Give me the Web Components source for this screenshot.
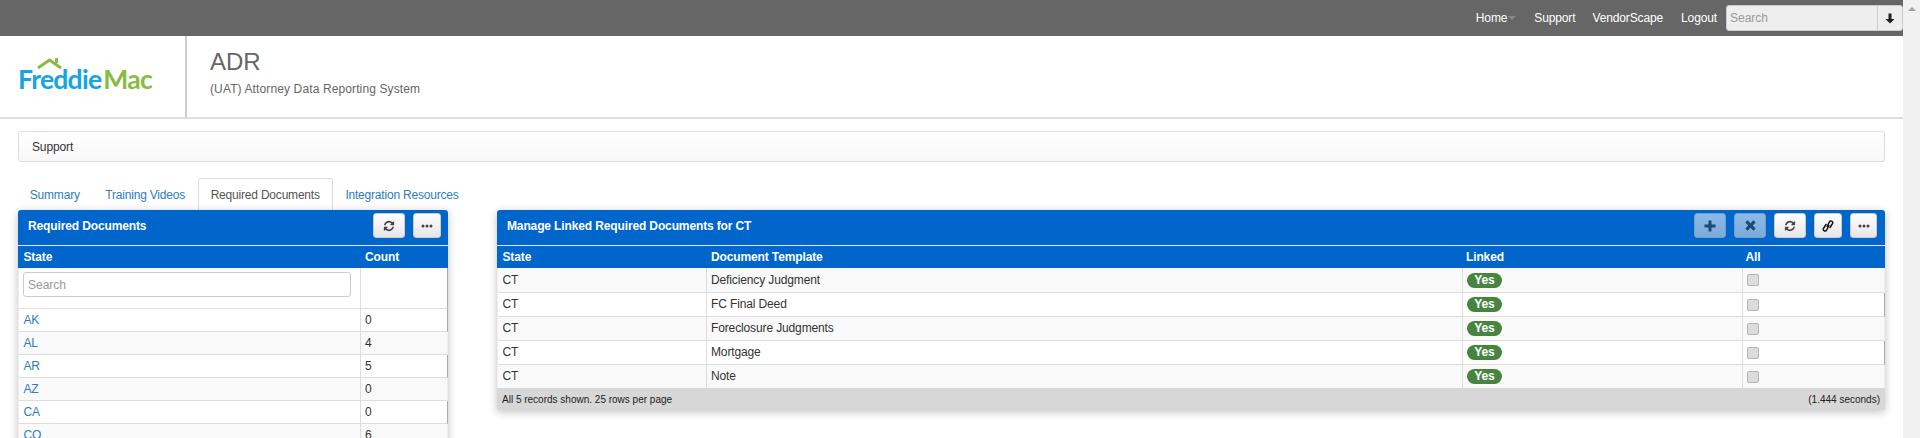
<!DOCTYPE html>
<html>
<head>
<meta charset="utf-8">
<title>ADR</title>
<style>
    html, body { margin: 0; height: 100%; overflow: hidden; background: #fff; }
    body { font-family: "Liberation Sans", Arial, sans-serif; font-size: 12px; color: #333; letter-spacing: -.13px; }
</style>
</head>
<body>
<app-shell>
    <top-nav></top-nav>
    <brand-header title="ADR" subtitle="(UAT) Attorney Data Reporting System"></brand-header>
    <crumb-bar>Support</crumb-bar>
    <tab-strip active="Required Documents" tabs="Summary|Training Videos|Required Documents|Integration Resources"></tab-strip>
    <panel-row>
        <data-panel heading="Required Documents">
            <icon-btn slot="actions" icon="refresh" w="32"></icon-btn>
            <icon-btn slot="actions" icon="more" w="28"></icon-btn>
            <state-table></state-table>
        </data-panel>
        <data-panel heading="Manage Linked Required Documents for CT">
            <icon-btn slot="actions" icon="plus" w="32" disabled></icon-btn>
            <icon-btn slot="actions" icon="times" w="32" disabled></icon-btn>
            <icon-btn slot="actions" icon="refresh" w="32"></icon-btn>
            <icon-btn slot="actions" icon="link" w="28"></icon-btn>
            <icon-btn slot="actions" icon="more" w="27" style="margin-right:1px"></icon-btn>
            <linked-table></linked-table>
        </data-panel>
    </panel-row>
</app-shell>

<script>
const FONT = `"Liberation Sans", Arial, sans-serif`;

const ICONS = {
    refresh: `<svg width="12" height="12" viewBox="0 0 1792 1792"><path d="M1639 1056q0 5-1 7-64 268-268 434.5t-478 166.5q-146 0-282.5-55t-243.5-157l-129 129q-19 19-45 19t-45-19-19-45v-448q0-26 19-45t45-19h448q26 0 45 19t19 45-19 45l-137 137q71 66 161 102t187 36q134 0 250-65t186-179q11-17 53-117 8-23 30-23h192q13 0 22.5 9.5t9.5 22.5zm25-800v448q0 26-19 45t-45 19h-448q-26 0-45-19t-19-45 19-45l138-138q-148-137-349-137-134 0-250 65t-186 179q-11 17-53 117-8 23-30 23h-199q-13 0-22.5-9.5t-9.5-22.5v-7q65-268 270-434.5t480-166.5q146 0 284 55.5t245 156.5l130-129q19-19 45-19t45 19 19 45z"/></svg>`,
    link: `<svg width="12" height="14" viewBox="0 0 12 14"><g fill="none" stroke="#111" stroke-width="1.500" stroke-linecap="round"><path d="M5.200 7.500L7.400 2.800A1.800 1.800 0 0 1 10.600 4.400L8 8.500"/><path d="M6.800 6.500L4.600 11.200A1.800 1.800 0 0 1 1.400 9.600L4 5.500"/></g></svg>`,
    more: `<svg width="12" height="4" viewBox="0 0 12 4"><circle cx="2" cy="2" r="1.500"/><circle cx="6" cy="2" r="1.500"/><circle cx="10" cy="2" r="1.500"/></svg>`,
    plus: `<svg width="12" height="12" viewBox="0 0 12 12"><path d="M4.500 0.500h3v4h4v3h-4v4h-3v-4h-4v-3h4z"/></svg>`,
    times: `<svg width="11" height="11" viewBox="0 0 11 11"><path d="M2.600 .3L5.500 3.200 8.400 .3 10.700 2.600 7.800 5.500 10.700 8.400 8.400 10.700 5.500 7.800 2.600 10.700 .3 8.400 3.200 5.500 .3 2.600z"/></svg>`,
    down: `<svg width="10" height="11" viewBox="0 0 10 11"><path d="M3.500 0.500h3v5.500h3L5 10.500 0.500 6h3z"/></svg>`
};

class AppShell extends HTMLElement {
    constructor() {
        super();
        this.attachShadow({ mode: 'open' });
        this.shadowRoot.innerHTML = `
            <style>
                :host { display: flex; height: 100vh; overflow: hidden; }
                .main { flex: 1; min-width: 0; }
                .scrollbar {
                    width: 17px;
                    background: #f1f1f1;
                    display: flex;
                    justify-content: center;
                    padding-top: 7px;
                    box-sizing: border-box;
                }
                .up {
                    width: 0; height: 0;
                    border-left: 4px solid transparent;
                    border-right: 4px solid transparent;
                    border-bottom: 4px solid #a3a3a3;
                }
            </style>
            <div class="main"><slot></slot></div>
            <div class="scrollbar"><div class="up"></div></div>
        `;
    }
}

class TopNav extends HTMLElement {
    constructor() {
        super();
        this.attachShadow({ mode: 'open' });
        this.shadowRoot.innerHTML = `
            <style>
                :host {
                    display: flex;
                    align-items: center;
                    justify-content: flex-end;
                    height: 36px;
                    background: #666;
                    color: #fff;
                    font: 12px ${FONT};
                }
                a { color: #fff; text-decoration: none; margin-right: 18px; }
                a.tight { margin-right: 17px; }
                .home { display: flex; align-items: center; margin-right: 18px; }
                .home a { margin: 0; }
                .caret {
                    width: 0; height: 0; margin-left: 1px;
                    border-left: 4px solid transparent;
                    border-right: 4px solid transparent;
                    border-top: 4px solid #888;
                }
                a.last { margin-right: 9px; }
                .search {
                    display: flex;
                    width: 177px;
                    height: 26px;
                    background: #eee;
                    border: 1px solid #ccc;
                    border-radius: 3px;
                    box-sizing: border-box;
                }
                input {
                    flex: 1; min-width: 0;
                    border: 0; background: none; outline: 0;
                    padding: 0 3px;
                    font: 12px ${FONT};
                }
                input::placeholder { color: #999; opacity: 1; }
                .drop {
                    width: 24px;
                    border-left: 1px solid #ccc;
                    display: flex; align-items: center; justify-content: center;
                    fill: #222;
                }
            </style>
            <div class="home"><a href="#">Home</a><span class="caret"></span></div>
            <a href="#" class="tight">Support</a>
            <a href="#">VendorScape</a>
            <a href="#" class="last">Logout</a>
            <div class="search">
                <input placeholder="Search">
                <div class="drop">${ICONS.down}</div>
            </div>
        `;
    }
}

class BrandHeader extends HTMLElement {
    connectedCallback() {
        if (this.shadowRoot) return;
        this.attachShadow({ mode: 'open' });
        this.shadowRoot.innerHTML = `
            <style>
                :host {
                    display: flex;
                    height: 83px;
                    box-sizing: border-box;
                    border-bottom: 2px solid #ddd;
                    background: #fff;
                }
                .logo {
                    width: 187px;
                    box-sizing: border-box;
                    padding: 21px 0 0 18px;
                    border-right: 2px solid #ccc;
                }
                .roof { display: block; margin-left: 19px; }
                .word {
                    display: block;
                    margin-top: -5px;
                    font: 700 26.500px/30px Lato, sans-serif;
                    letter-spacing: -.75px;
                    white-space: nowrap;
                }
                .freddie { color: #14a5e2; }
                .mac { color: #86bc42; margin-left: 2px; }
                .title { padding: 11px 0 0 23px; }
                h1 {
                    margin: 0;
                    font: 24px/30px ${FONT};
                    letter-spacing: 0;
                    color: #666;
                }
                p {
                    margin: 4px 0 0;
                    font: 12px/16px ${FONT};
                    letter-spacing: .12px;
                    color: #666;
                }
            </style>
            <div class="logo">
                <svg class="roof" width="25" height="12" viewBox="0 0 25 12">
                    <path d="M1 11L12.500 3 24 11" fill="none" stroke="#86bc42" stroke-width="3"/>
                    <rect x="18" y="1" width="3" height="5" fill="#86bc42"/>
                </svg>
                <span class="word"><span class="freddie">Freddie</span><span class="mac">Mac</span></span>
            </div>
            <div class="title">
                <h1>${this.getAttribute('title')}</h1>
                <p>${this.getAttribute('subtitle')}</p>
            </div>
        `;
    }
}

class CrumbBar extends HTMLElement {
    constructor() {
        super();
        this.attachShadow({ mode: 'open' });
        this.shadowRoot.innerHTML = `
            <style>
                :host {
                    display: flex;
                    align-items: center;
                    height: 31px;
                    box-sizing: border-box;
                    margin: 12px 18px 0 18px;
                    padding-left: 13px;
                    border: 1px solid #ddd;
                    border-radius: 3px;
                    background: linear-gradient(#fff, #f8f8f8);
                    box-shadow: inset 0 1px 0 #fff;
                    font: 12px ${FONT};
                    color: #333;
                }
            </style>
            <slot></slot>
        `;
    }
}

class TabStrip extends HTMLElement {
    connectedCallback() {
        if (this.shadowRoot) return;
        this.attachShadow({ mode: 'open' });
        const active = this.getAttribute('active');
        const tabs = this.getAttribute('tabs').split('|').map(t =>
            `<a href="#" class="${t === active ? 'on' : ''}">${t}</a>`).join('');
        this.shadowRoot.innerHTML = `
            <style>
                :host {
                    display: flex;
                    height: 32px;
                    margin: 16px 0 0 17px;
                    font: 12px ${FONT};
                    letter-spacing: -.2px;
                }
                a {
                    display: flex;
                    align-items: center;
                    padding: 0 11.800px;
                    color: #2e7cc2;
                    text-decoration: none;
                    border: 1px solid transparent;
                    border-bottom: 0;
                    border-radius: 3px 3px 0 0;
                }
                a.on { color: #555; background: #fff; border-color: #ddd; }
            </style>
            ${tabs}
        `;
    }
}

class PanelRow extends HTMLElement {
    constructor() {
        super();
        this.attachShadow({ mode: 'open' });
        this.shadowRoot.innerHTML = `
            <style>
                :host {
                    display: grid;
                    grid-template-columns: 430px 1388px;
                    column-gap: 49px;
                    align-items: start;
                    margin-left: 18px;
                }
            </style>
            <slot></slot>
        `;
    }
}

class DataPanel extends HTMLElement {
    connectedCallback() {
        if (this.shadowRoot) return;
        this.attachShadow({ mode: 'open' });
        this.shadowRoot.innerHTML = `
            <style>
                :host {
                    display: block;
                    background: #fff;
                    border-radius: 3px 3px 0 0;
                    box-shadow: 0 2px 8px rgba(0, 0, 0, .25);
                    font: 12px ${FONT};
                }
                .head {
                    display: flex;
                    align-items: flex-start;
                    justify-content: space-between;
                    height: 35px;
                    box-sizing: border-box;
                    padding: 3px 7px 0 10px;
                    background: #0066cc;
                    color: #fff;
                    font-weight: bold;
                    line-height: 26px;
                    border-radius: 3px 3px 0 0;
                }
                .actions { display: flex; gap: 8px; }
                .rule { height: 1px; background: #dfeaf7; }
            </style>
            <div class="head">
                <span>${this.getAttribute('heading')}</span>
                <div class="actions"><slot name="actions"></slot></div>
            </div>
            <div class="rule"></div>
            <slot></slot>
        `;
    }
}

class IconBtn extends HTMLElement {
    connectedCallback() {
        if (this.shadowRoot) return;
        this.attachShadow({ mode: 'open' });
        const off = this.hasAttribute('disabled');
        this.shadowRoot.innerHTML = `
            <style>
                :host {
                    display: flex;
                    align-items: center;
                    justify-content: center;
                    width: ${this.getAttribute('w')}px;
                    height: 25px;
                    box-sizing: border-box;
                    border: 1px solid #ccc;
                    border-radius: 3px;
                    background: linear-gradient(#fff, #e6e6e6);
                    fill: ${off ? '#333' : '#444'};
                    opacity: ${off ? '.55' : '1'};
                }
                svg { display: block; }
            </style>
            ${ICONS[this.getAttribute('icon')]}
        `;
    }
}

// shared look of both grids
const GRID_CSS = `
    :host { display: block; font: 12px ${FONT}; color: #333; }
    table { width: 100%; border-collapse: separate; border-spacing: 0; table-layout: fixed; }
    th {
        height: 22px;
        padding: 0 0 0 5.500px;
        background: #0066cc;
        color: #fff;
        text-align: left;
        font-size: 12px;
        font-weight: bold;
    }
    td {
        padding: 0 0 0 4.500px;
        border-bottom: 1px solid #ddd;
        border-right: 1px solid #ddd;
        box-sizing: border-box;
    }
    td:first-child { border-left: 1px solid #eee; }
    tr:nth-child(odd) td { background: #f9f9f9; }
    tr:nth-child(even) td { background: #fff; }
    tr:nth-child(even) td:last-child { border-right: 1px solid #aaa; }
    tr:nth-child(odd) td:last-child { border-right: 1px solid #eee; }
    a { color: #2e7cc2; text-decoration: none; }
`;

class StateTable extends HTMLElement {
    constructor() {
        super();
        this.attachShadow({ mode: 'open' });
        const rows = [['AK', 0], ['AL', 4], ['AR', 5], ['AZ', 0], ['CA', 0], ['CO', 6]];
        this.shadowRoot.innerHTML = `
            <style>
                ${GRID_CSS}
                tbody td { height: 23px; }
                tbody tr:nth-child(odd) td { background: #fff; }
                tbody tr:nth-child(even) td { background: #f9f9f9; }
                tbody tr:nth-child(odd) td:last-child { border-right: 1px solid #aaa; }
                tbody tr:nth-child(even) td:last-child { border-right: 1px solid #eee; }
                th:last-child, tbody td:last-child { padding-left: 4px; }
                .filter td { height: 41px; background: #f9f9f9; border-bottom: 1px solid #ddd; vertical-align: top; padding: 4px 0 0 4px; }
                input {
                    display: block;
                    width: 328px;
                    height: 25px;
                    box-sizing: border-box;
                    padding: 0 4px;
                    border: 1px solid #ccc;
                    border-radius: 3px;
                    font: 12px ${FONT};
                    outline: 0;
                }
                input::placeholder { color: #999; opacity: 1; }
            </style>
            <table>
                <colgroup><col style="width:343px"><col></colgroup>
                <thead>
                    <tr><th>State</th><th>Count</th></tr>
                    <tr class="filter"><td><input placeholder="Search"></td><td></td></tr>
                </thead>
                <tbody>
                    ${rows.map(r => `<tr><td><a href="#">${r[0]}</a></td><td>${r[1]}</td></tr>`).join('')}
                </tbody>
            </table>
        `;
    }
}

class LinkedTable extends HTMLElement {
    constructor() {
        super();
        this.attachShadow({ mode: 'open' });
        const docs = ['Deficiency Judgment', 'FC Final Deed', 'Foreclosure Judgments', 'Mortgage', 'Note'];
        this.shadowRoot.innerHTML = `
            <style>
                ${GRID_CSS}
                tbody td { height: 24px; }
                tbody tr:first-child td { height: 25px; }
                tbody tr:last-child td { height: 23px; border-bottom: 0; }
                tbody td:nth-child(-n+2) { padding-bottom: 1px; }
                th:nth-child(2) { padding-left: 4px; }
                td:nth-child(2) { padding-left: 4px; }
                th:nth-child(3) { padding-left: 3px; }
                td:nth-child(3) { padding-left: 4px; }
                th:nth-child(4) { padding-left: 2.500px; }
                td:nth-child(4) { padding-left: 4px; }
                .yes {
                    display: block;
                    width: 35px;
                    height: 15px;
                    border-radius: 8px;
                    background: #46843f;
                    color: #fff;
                    font: bold 12px/15px ${FONT};
                    text-align: center;
                }
                .box {
                    display: block;
                    width: 10px;
                    height: 10px;
                    border: 1px solid #b5b5b5;
                    border-radius: 2px;
                    background: #dcdcdc;
                }
                .foot {
                    display: flex;
                    align-items: center;
                    justify-content: space-between;
                    height: 22px;
                    padding: 0 5px;
                    background: #d7d7d7;
                    font-size: 10px;
                    letter-spacing: 0;
                    color: #222;
                }
            </style>
            <table>
                <colgroup><col style="width:210px"><col style="width:756px"><col style="width:280px"><col></colgroup>
                <thead><tr><th>State</th><th>Document Template</th><th>Linked</th><th>All</th></tr></thead>
                <tbody>
                    ${docs.map(d => `<tr><td>CT</td><td>${d}</td><td><span class="yes">Yes</span></td><td><span class="box"></span></td></tr>`).join('')}
                </tbody>
            </table>
            <div class="foot"><span>All 5 records shown. 25 rows per page</span><span>(1.444 seconds)</span></div>
        `;
    }
}

customElements.define('app-shell', AppShell);
customElements.define('top-nav', TopNav);
customElements.define('brand-header', BrandHeader);
customElements.define('crumb-bar', CrumbBar);
customElements.define('tab-strip', TabStrip);
customElements.define('panel-row', PanelRow);
customElements.define('data-panel', DataPanel);
customElements.define('icon-btn', IconBtn);
customElements.define('state-table', StateTable);
customElements.define('linked-table', LinkedTable);
</script>
</body>
</html>
